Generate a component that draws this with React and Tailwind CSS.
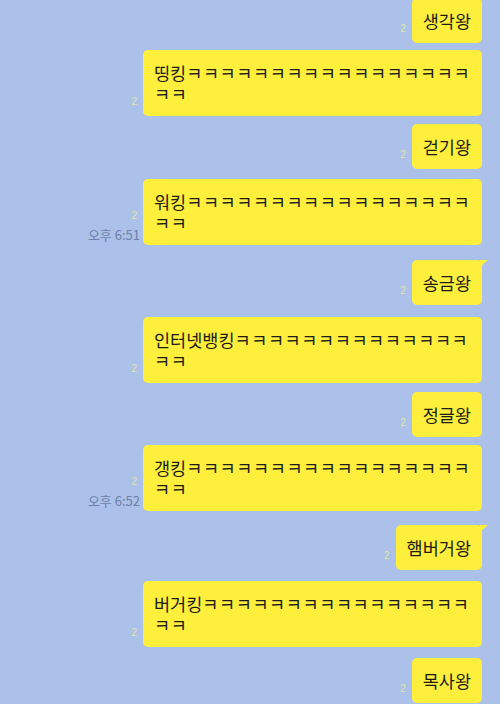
import React from "react";

const K = "ㅋ";

function Meta({ read = "2", time }) {
  return (
    <div className="flex flex-col items-end mr-[5px] mb-[2px] leading-none">
      <span className="text-[10px] text-[#dfe6a6] font-['Liberation_Sans',sans-serif] mb-[7px] mr-[1px]">{read}</span>
      {time && (
        <span className="text-[13px] text-[#6f80a6] font-['Noto_Sans_CJK_KR',sans-serif] mb-[2px] -mr-[2px]">{time}</span>
      )}
    </div>
  );
}

function Bubble({ children, tail, long, className = "", mt = "" }) {
  return (
    <div className={`flex justify-end items-end ${mt}`}>
      {children[0]}
      <div
        className={`relative bg-[#fdef3c] rounded-[5px] text-[#1c1c1c] text-[17.5px] leading-[21px] font-normal font-['Noto_Sans_CJK_KR',sans-serif] ${long ? "w-[339px] pl-[11px] py-[12px]" : "px-[11px] py-[12px]"} ${className}`}
      >
        {tail && (
          <svg className="absolute -right-[6px] top-0" width="8" height="8" viewBox="0 0 8 8">
            <path d="M0 0 L8 0 L0 7 Z" fill="#fdef3c" />
          </svg>
        )}
        {children[1]}
      </div>
    </div>
  );
}

function Long({ head, time, mt }) {
  const n = 19 - head.length;
  return (
    <Bubble long mt={mt}>
      <Meta time={time} />
      <div className="whitespace-nowrap">
        <div>
          {head}
          <span className="tracking-[0.6px]">{K.repeat(n)}</span>
        </div>
        <div className="tracking-[0.6px]">{K.repeat(2)}</div>
      </div>
    </Bubble>
  );
}

function Short({ text, tail, mt }) {
  return (
    <Bubble tail={tail} mt={mt}>
      <Meta />
      <div className="whitespace-nowrap">{text}</div>
    </Bubble>
  );
}

export default function App() {
  return (
    <div className="w-[500px] h-[704px] overflow-hidden bg-[#abc1e9]">
      <div className="flex flex-col pr-[18px] -mt-[2px]">
        <Short text="생각왕" />
        <Long head="띵킹" mt="mt-[7px]" />
        <Short text="걷기왕" mt="mt-[8px]" />
        <Long head="워킹" time="오후 6:51" mt="mt-[10px]" />
        <Short text="송금왕" tail mt="mt-[15px]" />
        <Long head="인터넷뱅킹" mt="mt-[12px]" />
        <Short text="정글왕" mt="mt-[9px]" />
        <Long head="갱킹" time="오후 6:52" mt="mt-[8px]" />
        <Short text="햄버거왕" tail mt="mt-[14px]" />
        <Long head="버거킹" mt="mt-[11px]" />
        <Short text="목사왕" mt="mt-[11px]" />
      </div>
    </div>
  );
}
